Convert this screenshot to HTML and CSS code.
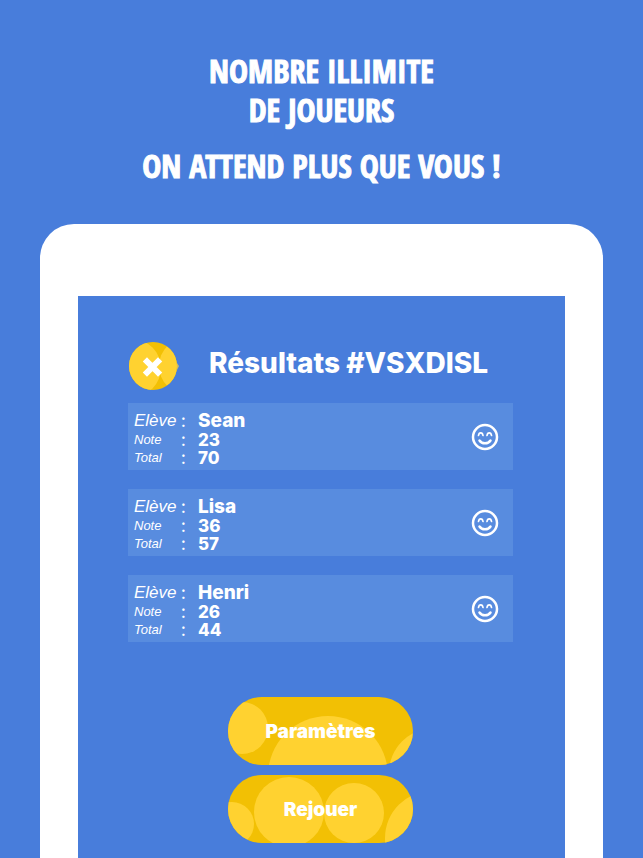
FILE: index.html
```html
<!DOCTYPE html>
<html lang="fr">
<head>
<meta charset="utf-8">
<meta name="viewport" content="width=device-width, initial-scale=1">
<title>Résultats</title>
<link rel="stylesheet" href="styles.css">
</head>
<body>
<svg class="defs" aria-hidden="true">
  <symbol id="smile" viewBox="0 0 28 28">
    <g fill="none" stroke="currentColor" stroke-linecap="round">
      <circle cx="14" cy="14" r="12" stroke-width="2.500"/>
      <path d="M7.500 12.500C8 9 11.500 9 12 12.500M16 12.500C16.500 9 20 9 20.500 12.500" stroke-width="1.700"/>
      <path d="M8.500 17.500C11 21.300 17 21.300 19.500 17.500" stroke-width="2.500"/>
    </g>
  </symbol>
</svg>
<header class="promo">
  <p>NOMBRE ILLIMITE<br>DE JOUEURS</p>
  <p>ON ATTEND PLUS QUE VOUS !</p>
</header>
<div class="device">
  <main class="screen">
    <div class="heading">
      <button class="close" type="button" aria-label="Fermer">
        <svg viewBox="0 0 50 50" aria-hidden="true">
          <clipPath id="disc"><circle cx="24" cy="24" r="24"/></clipPath>
          <g clip-path="url(#disc)">
            <rect width="50" height="50" fill="#f2c004"/>
            <circle cx="3" cy="26" r="29" fill="#ffd230"/>
            <circle cx="58" cy="24" r="28" fill="#ffd230"/>
          </g>
          <path d="M48 21l2 3-2 4z" fill="#cfba62"/>
          <path d="M18 19.500l11 11M29 19.500l-11 11" stroke="#fff" stroke-width="6" stroke-linecap="square"/>
        </svg>
      </button>
      <h1>Résultats #VSXDISL</h1>
    </div>
    <ul class="results">
      <li class="card">
        <dl>
          <div class="row name"><dt>Elève</dt><dd>Sean</dd></div>
          <div class="row"><dt>Note</dt><dd>23</dd></div>
          <div class="row"><dt>Total</dt><dd>70</dd></div>
        </dl>
        <svg class="smile" aria-hidden="true"><use href="#smile"/></svg>
      </li>
      <li class="card">
        <dl>
          <div class="row name"><dt>Elève</dt><dd>Lisa</dd></div>
          <div class="row"><dt>Note</dt><dd>36</dd></div>
          <div class="row"><dt>Total</dt><dd>57</dd></div>
        </dl>
        <svg class="smile" aria-hidden="true"><use href="#smile"/></svg>
      </li>
      <li class="card">
        <dl>
          <div class="row name"><dt>Elève</dt><dd>Henri</dd></div>
          <div class="row"><dt>Note</dt><dd>26</dd></div>
          <div class="row"><dt>Total</dt><dd>44</dd></div>
        </dl>
        <svg class="smile" aria-hidden="true"><use href="#smile"/></svg>
      </li>
    </ul>
    <div class="actions">
      <button class="pill" type="button">
        <svg viewBox="0 0 185 68" preserveAspectRatio="xMidYMid slice" aria-hidden="true">
          <circle cx="14" cy="31" r="26"/><circle cx="100" cy="79" r="60"/><circle cx="206" cy="76" r="45"/>
        </svg>
        <span>Paramètres</span>
      </button>
      <button class="pill" type="button">
        <svg viewBox="0 0 185 68" preserveAspectRatio="xMidYMid slice" aria-hidden="true">
          <circle cx="4" cy="49" r="22"/><circle cx="61" cy="37" r="35"/><circle cx="126" cy="38" r="30"/><circle cx="204" cy="63" r="47"/>
        </svg>
        <span>Rejouer</span>
      </button>
    </div>
  </main>
</div>
</body>
</html>
```
FILE: styles.css
```css
* { box-sizing: border-box; }

body {
  margin: 0;
  min-height: 100vh;
  display: flex;
  flex-direction: column;
  background: #487ddb;
  color: #fff;
  font-family: Inter, sans-serif;
}

.defs { display: none; }

.promo {
  padding: 51px 16px 39px;
  text-align: center;
  font: 800 32px/39px "Open Sans Condensed", "Open Sans", sans-serif;
  -webkit-text-stroke: 1px #fff;
}

.promo p { margin: 0; }
.promo p + p { margin-top: 17px; }

.device {
  flex: 1;
  display: flex;
  margin: 0 40px;
  padding: 72px 38px 0;
  border-radius: 34px 34px 0 0;
  background: #fff;
}

.screen {
  flex: 1;
  padding: 46px 52px 15px 50px;
  background: #487ddb;
}

.heading {
  display: flex;
  align-items: center;
  gap: 30px;
  margin-bottom: 11px;
}

.heading h1 {
  margin: 0;
  padding-bottom: 8px;
  font-size: 28px;
  line-height: 34px;
  font-weight: 800;
  white-space: nowrap;
}

button {
  padding: 0;
  border: 0;
  color: inherit;
  font-family: inherit;
  cursor: pointer;
}

.close {
  width: 50px;
  height: 50px;
  margin-left: 1px;
  background: none;
}

.close svg { display: block; }

.results {
  display: grid;
  gap: 19px;
  margin: 0;
  padding: 0;
  list-style: none;
}

.card {
  display: flex;
  align-items: center;
  justify-content: space-between;
  padding: 0 14px 0 6px;
  background: #588cdf;
}

.card dl {
  margin: 0;
  padding: 7px 0 3px;
}

.row {
  display: grid;
  grid-template-columns: 64px auto;
  align-items: center;
  font-size: 17px;
  line-height: 18px;
}

.row.name {
  font-size: 19px;
  line-height: 21px;
}

.row dt {
  display: flex;
  align-items: center;
  justify-content: space-between;
  padding-right: 12px;
  font-family: "Liberation Sans", sans-serif;
  font-size: 13px;
  font-style: italic;
}

.row.name dt { font-size: 17px; }

.row dt::after {
  content: ":";
  font-family: Inter, sans-serif;
  font-size: 18px;
  font-style: normal;
}

.row dd {
  margin: 0;
  font-weight: 800;
}

.smile {
  width: 28px;
  height: 28px;
}

.actions {
  display: grid;
  justify-content: center;
  gap: 10px;
  margin-top: 55px;
}

.pill {
  display: grid;
  width: 185px;
  height: 68px;
  border-radius: 34px;
  overflow: hidden;
  background: #f2c004;
  font-size: 19px;
  font-weight: 900;
}

.pill svg,
.pill span { grid-area: 1 / 1; }

.pill svg {
  width: 100%;
  height: 100%;
  fill: #ffd230;
}

.pill span { place-self: center; }
```
